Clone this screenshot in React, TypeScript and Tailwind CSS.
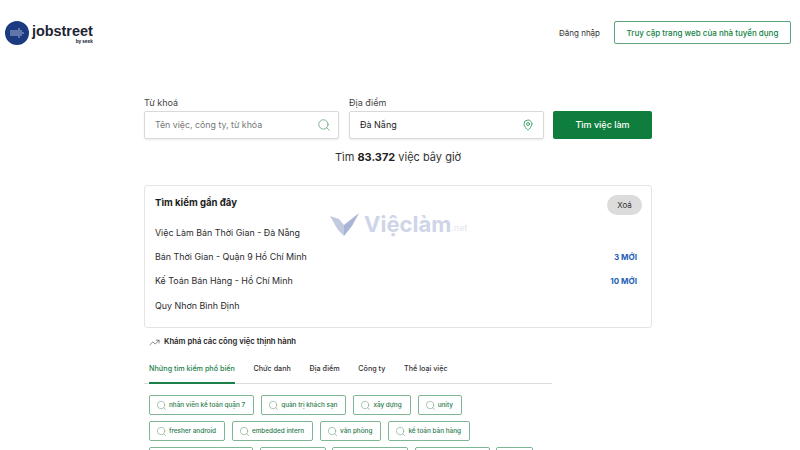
import { MapPin, Search, TrendingUp } from 'lucide-react';

const chipRows = [
  ['nhân viên kế toán quận 7', 'quản trị khách sạn', 'xây dựng', 'unity'],
  ['fresher android', 'embedded intern', 'văn phòng', 'kế toán bán hàng'],
];

const hiddenChipWidths = ['w-[104px]', 'w-[66px]', 'w-[76px]', 'w-[75px]', 'w-[37px]'];

const recent = [
  { label: 'Việc Làm Bán Thời Gian - Đà Nẵng', badge: '' },
  { label: 'Bán Thời Gian - Quận 9 Hồ Chí Minh', badge: '3 MỚI' },
  { label: 'Kế Toán Bán Hàng - Hồ Chí Minh', badge: '10 MỚI' },
  { label: 'Quy Nhơn Bình Định', badge: '' },
];

const tabs = ['Chức danh', 'Địa điểm', 'Công ty', 'Thể loại việc'];

function Logo() {
  const dots = [];
  for (let row = 0; row < 7; row++) {
    for (let col = 0; col < 7; col++) {
      const inArrow = col <= 3 ? Math.abs(row - 3) <= 1 : Math.abs(row - 3) <= 6 - col;
      if (inArrow) dots.push(<circle key={`${row}-${col}`} cx={6 + col * 2} cy={6 + row * 2} r="0.65" fill="#dfe6f5" />);
    }
  }
  return (
    <div className="flex items-start gap-[3px]">
      <svg width="24" height="24" viewBox="0 0 24 24">
        <circle cx="12" cy="12" r="12" fill="#1c3a80" />
        {dots}
      </svg>
      <div className="flex flex-col items-end pt-[2px]">
        <span className="text-[14.4px] leading-[16px] font-bold text-[#1d2433] [font-family:'Liberation_Sans',sans-serif]">jobstreet</span>
        <span className="text-[4.5px] leading-[6px] font-bold text-[#1d2433]">by seek</span>
      </div>
    </div>
  );
}

function Watermark() {
  return (
    <div className="absolute left-[185px] top-[26px] flex items-center gap-[5px]">
      <svg width="29" height="23" viewBox="0 0 29 23">
        <path d="M0 3 L9 6 L14 12 L14 23 L8 17 Z" fill="#c3c9de" />
        <path d="M14 12 L29 0 L22 13 L14 23 Z" fill="#aab4d6" />
      </svg>
      <span className="text-[22px] leading-[24px] font-bold text-[#cfd5e8]">Việclàm</span>
      <span className="ml-[-5px] mt-[8px] text-[9px] leading-[10px] text-[#e3e6ef]">.net</span>
    </div>
  );
}

function Chip({ text }: { text: string }) {
  return (
    <span className="flex h-[20px] items-center gap-[2px] rounded-[2px] border border-[#7fb795] pl-[6px] pr-[8px] text-[#2a7a4b]">
      <Search className="h-[11px] w-[11px] shrink-0 text-[#6f9f83]" strokeWidth={1.25} />
      <span className="text-[6.4px] leading-[11px] font-medium">{text}</span>
    </span>
  );
}

export default function App() {
  return (
    <div className="h-[450px] overflow-hidden bg-white font-['Inter',sans-serif] text-[#1c1c1c]">
      <header className="flex h-[65px] items-start justify-between pl-[5px] pr-[9px]">
        <div className="pt-[21px]">
          <Logo />
        </div>
        <div className="flex items-center gap-[14px] pt-[21px]">
          <span className="text-[8px] text-[#333]">Đăng nhập</span>
          <button className="h-[23px] w-[177px] rounded-[2px] border border-[#5fa57c] text-[8px] font-medium text-[#12813f]">
            Truy cập trang web của nhà tuyển dụng
          </button>
        </div>
      </header>

      <main className="ml-[144px] w-[508px]">
        <div className="flex items-end gap-[9px] pt-[32px]">
          <label className="w-[195px]">
            <span className="mb-[2px] block text-[9px] leading-[12px] text-[#444]">Từ khoá</span>
            <div className="flex h-[28px] items-center justify-between rounded-[2px] border border-[#d9d9d9] pl-[10px] pr-[7px] shadow-[0_1px_2px_rgba(0,0,0,0.08)]">
              <span className="text-[8.8px] text-[#777]">Tên việc, công ty, từ khóa</span>
              <Search className="h-[14px] w-[14px] text-[#4c9a6c]" strokeWidth={1.25} />
            </div>
          </label>
          <label className="ml-[1px] w-[195px]">
            <span className="mb-[2px] block text-[9px] leading-[12px] text-[#444]">Địa điểm</span>
            <div className="flex h-[28px] items-center justify-between rounded-[2px] border border-[#d9d9d9] pl-[10px] pr-[9px] shadow-[0_1px_2px_rgba(0,0,0,0.08)]">
              <span className="text-[9px] text-[#222]">Đà Nẵng</span>
              <MapPin className="h-[12px] w-[12px] text-[#2f9a5b]" strokeWidth={1.75} />
            </div>
          </label>
          <button className="h-[28px] w-[99px] rounded-[2px] bg-[#0f7d3c] text-[9px] font-medium text-white">
            Tìm việc làm
          </button>
        </div>

        <p className="mt-[11px] text-center text-[11px] leading-[15px] text-[#333]">
          Tìm <b className="font-bold text-[#222]">83.372</b> việc bây giờ
        </p>

        <section className="relative mt-[20px] h-[143px] rounded-[3px] border border-[#e4e4e4] pl-[10px] pr-[9px] pt-[9px]">
          <Watermark />
          <div className="flex h-[25px] items-start justify-between">
            <h2 className="pt-[2px] text-[9.6px] leading-[12px] font-bold text-[#1c1c1c]">Tìm kiếm gần đây</h2>
            <button className="h-[20px] w-[35px] rounded-full bg-[#dcdcdc] text-[8px] text-[#333]">Xoá</button>
          </div>
          <ul>
            {recent.map((item) => (
              <li key={item.label} className="flex h-[24.4px] items-center justify-between pr-[5px]">
                <span className="text-[8.9px] text-[#2b2b2b]">{item.label}</span>
                {item.badge && <span className="text-[8px] font-bold text-[#1a5fb4]">{item.badge}</span>}
              </li>
            ))}
          </ul>
        </section>

        <div className="mt-[8px] flex items-center gap-[4px] pl-[5px]">
          <TrendingUp className="h-[11px] w-[11px] text-[#333]" strokeWidth={1.25} />
          <span className="text-[7.7px] leading-[12px] font-semibold text-[#1c1c1c]">Khám phá các công việc thịnh hành</span>
        </div>

        <nav className="mt-[12px] flex h-[24px] w-[408px] items-start gap-[18.7px] border-b border-[#dcdcdc] pl-[5px] pt-[3px]">
          <span className="h-[21px] whitespace-nowrap border-b-2 border-[#1a8048] text-[7.2px] leading-[12px] font-medium text-[#1a8048]">
            Những tìm kiếm phổ biến
          </span>
          {tabs.map((tab) => (
            <span key={tab} className="whitespace-nowrap text-[7.2px] leading-[12px] font-medium text-[#333]">{tab}</span>
          ))}
        </nav>

        <div className="mt-[11px] flex flex-col gap-[6px] pl-[5px]">
          {chipRows.map((row) => (
            <div key={row[0]} className="flex gap-[7px]">
              {row.map((text) => (
                <Chip key={text} text={text} />
              ))}
            </div>
          ))}
          <div className="flex gap-[6.5px]">
            {hiddenChipWidths.map((width) => (
              <span key={width} className={`h-[20px] rounded-[2px] border border-[#7fb795] ${width}`} />
            ))}
          </div>
        </div>
      </main>
    </div>
  );
}
